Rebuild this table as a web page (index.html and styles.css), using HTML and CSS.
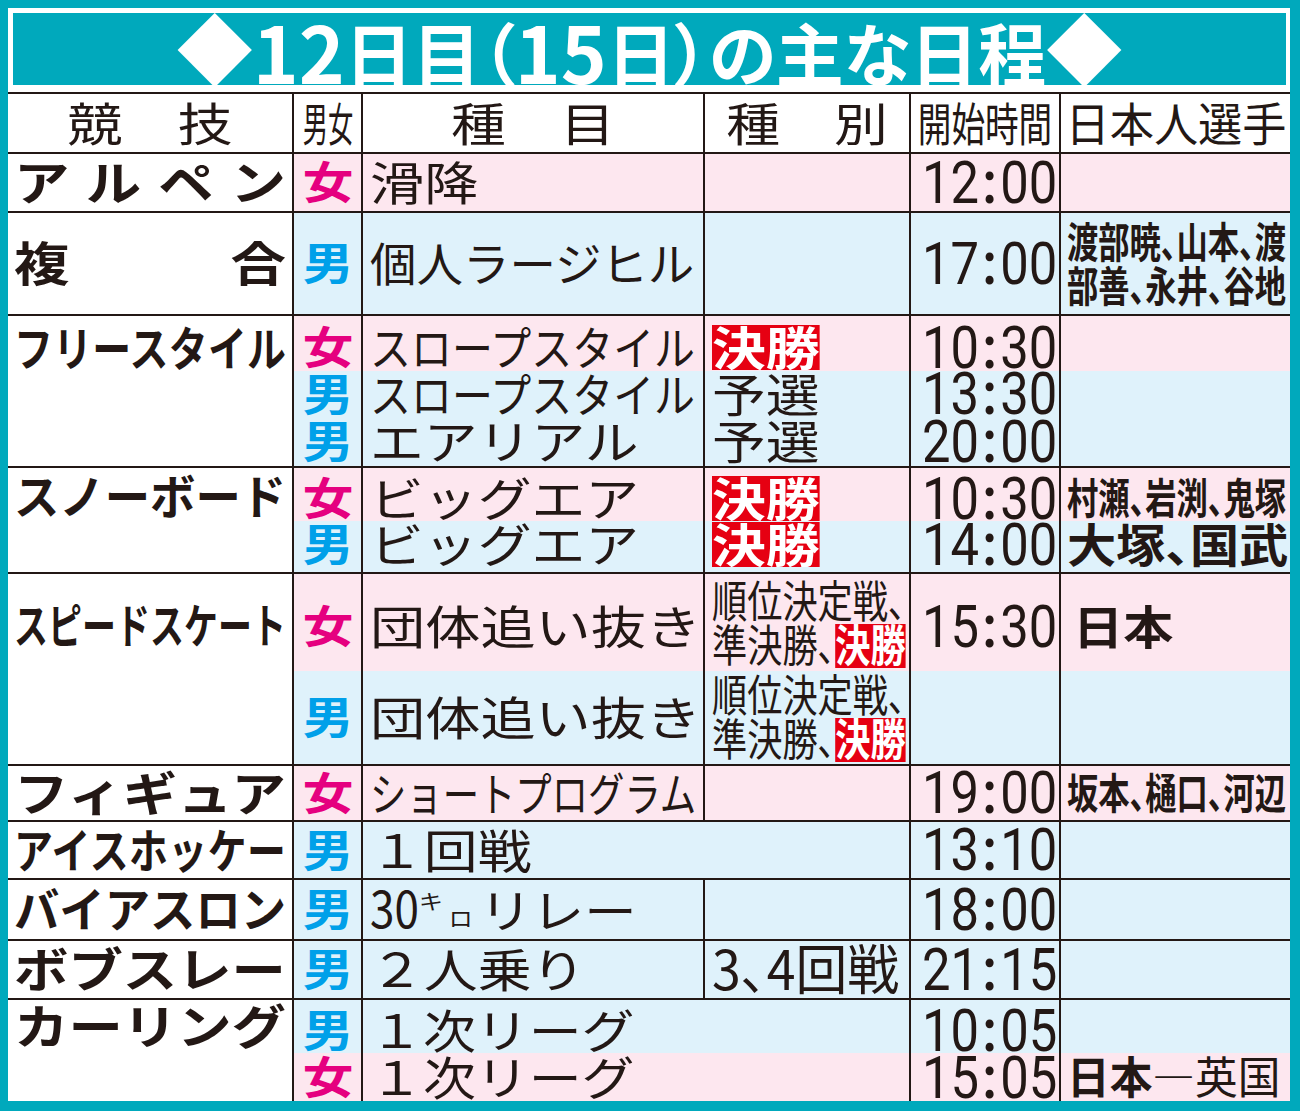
FILE: index.html
```html
<!DOCTYPE html>
<html lang="ja">
<head>
<meta charset="utf-8">
<title>12日目（15日）の主な日程</title>
<link rel="stylesheet" href="styles.css">
</head>
<body>
<div class="frame">
<div class="sheet">
<h1 class="title"><span class="dia">◆</span><span class="dg">12</span>日目（<span class="dg">15</span>日）の主な日程<span class="dia">◆</span></h1>
<table>
<colgroup><col class="c1"><col class="c2"><col class="c3"><col class="c4"><col class="c5"><col class="c6"></colgroup>
<thead>
<tr class="hd h60">
<th><div class="hc"><span class="x s120">競　技</span></div></th>
<th><div class="hc"><span class="x s55">男女</span></div></th>
<th><div class="hc"><span class="x s119">種　目</span></div></th>
<th><div class="hc"><span class="x s117">種　別</span></div></th>
<th><div class="hc"><span class="x s73">開始時間</span></div></th>
<th><div class="hc"><span class="x s96">日本人選手</span></div></th>
</tr>
</thead>
<tbody>
<tr class="g pk h59">
<td class="sp"><span class="x jn s118">アルペン</span></td>
<td class="mf f"><span class="x">女</span></td>
<td class="ev"><span class="x s118">滑降</span></td>
<td class="ty"></td>
<td class="tm"><span class="x">12<span class="cl">:</span>00</span></td>
<td class="nm"></td>
</tr>
<tr class="g bl h103">
<td class="sp"><span class="x jn s118">複合</span></td>
<td class="mf m"><span class="x">男</span></td>
<td class="ev"><span class="x s101">個人ラージヒル</span></td>
<td class="ty"></td>
<td class="tm"><span class="x">17<span class="cl">:</span>00</span></td>
<td class="nm"><span class="x nc s745">渡部暁、山本、渡<br>部善、永井、谷地</span></td>
</tr>
<tr class="g pk h57 dn">
<td class="sp top p10" rowspan="3"><span class="x jn s827">フリースタイル</span></td>
<td class="mf f"><span class="x">女</span></td>
<td class="ev"><span class="x s89">スロープスタイル</span></td>
<td class="ty"><span class="x win s117">決勝</span></td>
<td class="tm"><span class="x">10<span class="cl">:</span>30</span></td>
<td class="nm"></td>
</tr>
<tr class="bl h46">
<td class="mf m"><span class="x">男</span></td>
<td class="ev"><span class="x s89">スロープスタイル</span></td>
<td class="ty"><span class="x s117">予選</span></td>
<td class="tm"><span class="x">13<span class="cl">:</span>30</span></td>
<td class="nm"></td>
</tr>
<tr class="bl h49">
<td class="mf m"><span class="x">男</span></td>
<td class="ev"><span class="x s117">エアリアル</span></td>
<td class="ty"><span class="x s117">予選</span></td>
<td class="tm"><span class="x">20<span class="cl">:</span>00</span></td>
<td class="nm"></td>
</tr>
<tr class="g pk h55 dn">
<td class="sp top p6" rowspan="2"><span class="x jn s965">スノーボード</span></td>
<td class="mf f"><span class="x">女</span></td>
<td class="ev"><span class="x s117">ビッグエア</span></td>
<td class="ty"><span class="x win s117">決勝</span></td>
<td class="tm"><span class="x">10<span class="cl">:</span>30</span></td>
<td class="nm"><span class="x s745">村瀬、岩渕、鬼塚</span></td>
</tr>
<tr class="bl h51 up">
<td class="mf m"><span class="x">男</span></td>
<td class="ev"><span class="x s117">ビッグエア</span></td>
<td class="ty"><span class="x win s117">決勝</span></td>
<td class="tm"><span class="x">14<span class="cl">:</span>00</span></td>
<td class="nm"><span class="x big s107">大塚、国武</span></td>
</tr>
<tr class="g pk h99 dn">
<td class="sp top p29" rowspan="2"><span class="x jn s723">スピードスケート</span></td>
<td class="mf f"><span class="x">女</span></td>
<td class="ev"><span class="x s120">団体追い抜き</span></td>
<td class="ty p0"><span class="x tw s80">順位決定戦、<br>準決勝、<span class="win">決勝</span></span></td>
<td class="tm"><span class="x">15<span class="cl">:</span>30</span></td>
<td class="nm"><span class="x big jp s109">日本</span></td>
</tr>
<tr class="bl h93">
<td class="mf m"><span class="x">男</span></td>
<td class="ev"><span class="x s120">団体追い抜き</span></td>
<td class="ty top"><span class="x tw s80">順位決定戦、<br>準決勝、<span class="win">決勝</span></span></td>
<td class="tm"></td>
<td class="nm"></td>
</tr>
<tr class="g pk h56">
<td class="sp"><span class="x jn s1157">フィギュア</span></td>
<td class="mf f"><span class="x">女</span></td>
<td class="ev"><span class="x s79">ショートプログラム</span></td>
<td class="ty"></td>
<td class="tm"><span class="x">19<span class="cl">:</span>00</span></td>
<td class="nm"><span class="x s745">坂本、樋口、河辺</span></td>
</tr>
<tr class="g bl h58">
<td class="sp"><span class="x jn s827">アイスホッケー</span></td>
<td class="mf m"><span class="x">男</span></td>
<td class="ev" colspan="2"><span class="x s117">１回戦</span></td>
<td class="tm"><span class="x">13<span class="cl">:</span>10</span></td>
<td class="nm"></td>
</tr>
<tr class="g bl h61">
<td class="sp"><span class="x jn s965">バイアスロン</span></td>
<td class="mf m"><span class="x">男</span></td>
<td class="ev"><span class="x n30 s88">30</span><span class="x s114"><span class="ki">キ</span><span class="ro">ロ</span>リレー</span></td>
<td class="ty"></td>
<td class="tm"><span class="x">18<span class="cl">:</span>00</span></td>
<td class="nm"></td>
</tr>
<tr class="g bl h59">
<td class="sp"><span class="x jn s1157">ボブスレー</span></td>
<td class="mf m"><span class="x">男</span></td>
<td class="ev"><span class="x s117">２人乗り</span></td>
<td class="ty"><span class="x r34 s96">3、4回戦</span></td>
<td class="tm"><span class="x">21<span class="cl">:</span>15</span></td>
<td class="nm"></td>
</tr>
<tr class="g bl h54 dn">
<td class="sp top p4" rowspan="2"><span class="x jn s1157">カーリング</span></td>
<td class="mf m"><span class="x">男</span></td>
<td class="ev" colspan="2"><span class="x s115">１次リーグ</span></td>
<td class="tm"><span class="x">10<span class="cl">:</span>05</span></td>
<td class="nm"></td>
</tr>
<tr class="pk h49">
<td class="mf f"><span class="x">女</span></td>
<td class="ev" colspan="2"><span class="x s115">１次リーグ</span></td>
<td class="tm"><span class="x">15<span class="cl">:</span>05</span></td>
<td class="nm"><span class="x vs s97"><b>日本</b>―英国</span></td>
</tr>
</tbody>
</table>
</div>
</div>
</body>
</html>
```

FILE: styles.css
```css
* { margin: 0; padding: 0; box-sizing: border-box; }
html, body { width: 1300px; height: 1111px; overflow: hidden; }
body { background: #00a9bc; font-family: "Noto Sans CJK JP", "Noto Sans", sans-serif; color: #231815; }

.frame { width: 1300px; height: 1111px; padding: 8px 10px 10px 8px; background: #00a9bc; }
.sheet { height: 100%; background: #fff; overflow: hidden; }

.title {
  height: 72px; margin: 5px 4px 0 5px;
  background: #00a9bc; color: #fff;
  font-size: 68px; line-height: 64px; font-weight: 700;
  font-feature-settings: "palt";
  text-align: center; white-space: nowrap;
  padding-top: 1px;
}
.dia { font-size: 76px; line-height: 64px; vertical-align: 2px; }
.dg { font-size: 78px; line-height: 64px; vertical-align: -3px; }

table { width: 1282px; margin-top: 7px; table-layout: fixed; border-collapse: separate; border-spacing: 0; }
.c1 { width: 284px; } .c2 { width: 69px; } .c3 { width: 342px; }
.c4 { width: 206px; } .c5 { width: 150px; } .c6 { width: 231px; }

th, td {
  padding: 0; border-left: 2px solid #231815;
  vertical-align: middle; text-align: left; white-space: nowrap;
  line-height: 0; font-weight: 400;
}
th:first-child, td.sp { border-left: 0; }
.hd > th, .g > td { border-top: 2px solid #231815; }
.pk > td { background: #fde7ef; }
.bl > td { background: #dff2fb; }
table td.sp { background: #fff; }

.h46 { height: 46px; } .h49 { height: 49px; } .h51 { height: 51px; } .h54 { height: 54px; }
.h55 { height: 55px; } .h56 { height: 56px; } .h57 { height: 57px; } .h58 { height: 58px; }
.h59 { height: 59px; } .h60 { height: 60px; } .h61 { height: 61px; } .h93 { height: 93px; }
.h99 { height: 99px; } .h103 { height: 103px; }

.x {
  display: inline-block; line-height: 40px; padding-bottom: 5px;
  transform: scaleX(var(--s, 1)); transform-origin: 0 50%;
}
.s55 { --s: .55; } .s73 { --s: .73; } .s723 { --s: .723; } .s745 { --s: .745; }
.s79 { --s: .79; } .s80 { --s: .8; } .s827 { --s: .827; } .s88 { --s: .88; }
.s89 { --s: .89; } .s96 { --s: .96; } .s965 { --s: .965; } .s97 { --s: .97; }
.s101 { --s: 1.01; } .s107 { --s: 1.07; } .s109 { --s: 1.09; } .s114 { --s: 1.14; }
.s115 { --s: 1.15; } .s1157 { --s: 1.157; } .s117 { --s: 1.17; } .s118 { --s: 1.18; }
.s119 { --s: 1.19; } .s120 { --s: 1.2; }

.hc { display: flex; justify-content: center; font-size: 46px; }
.hc .x, .mf .x, .tm .x { transform-origin: 50% 50%; }

.sp { padding: 0 6px; font-size: 47px; font-weight: 700; }
td.top { vertical-align: top; }
.p4 { padding-top: 4px; } .p6 { padding-top: 6px; } .p10 { padding-top: 10px; } .p29 { padding-top: 29px; }
.jn { width: calc(272px / var(--s)); text-align: justify; text-align-last: justify; }

.mf { text-align: center; font-size: 44px; font-weight: 700; }
.mf .x { --s: 1.15; }
.f { color: #e5007f; }
.m { color: #00a0e9; }

.ev, .ty { padding-left: 7px; font-size: 46px; }

.tm { text-align: center; font-family: Roboto, "Liberation Sans", sans-serif; font-size: 59px; }
.tm .x { --s: .86; line-height: 42px; padding-bottom: 0; }
.cl { margin: 0 4px; font-weight: 700; }

.nm { padding-left: 6px; font-size: 42px; font-weight: 700; font-feature-settings: "palt"; }
.nc { line-height: 43.5px; padding-bottom: 4px; }
.big { font-size: 46px; }
.jp { margin-left: 6px; }
.vs { font-size: 44px; font-weight: 400; }
.vs b { font-weight: 700; }

.win { background: #e60012; color: #fff; font-weight: 700; }
.tw { font-size: 44px; line-height: 44px; padding-bottom: 0; font-feature-settings: "palt"; }
.tw .win { display: inline-block; line-height: 39px; padding-bottom: 5px; }
.r34 { font-size: 54px; font-feature-settings: "palt"; }
.n30 { font-size: 50px; margin-right: -6.6px; }
.ki, .ro { font-size: 21px; line-height: 0; }
.ki { vertical-align: 19px; }
.ro { vertical-align: 2px; margin: 0 6px 0 5px; }

.dn > td:not(.sp) { padding-top: 8px; }
.dn > td.p0 { padding-top: 0; }
.up > td { padding-bottom: 4px; }
```
